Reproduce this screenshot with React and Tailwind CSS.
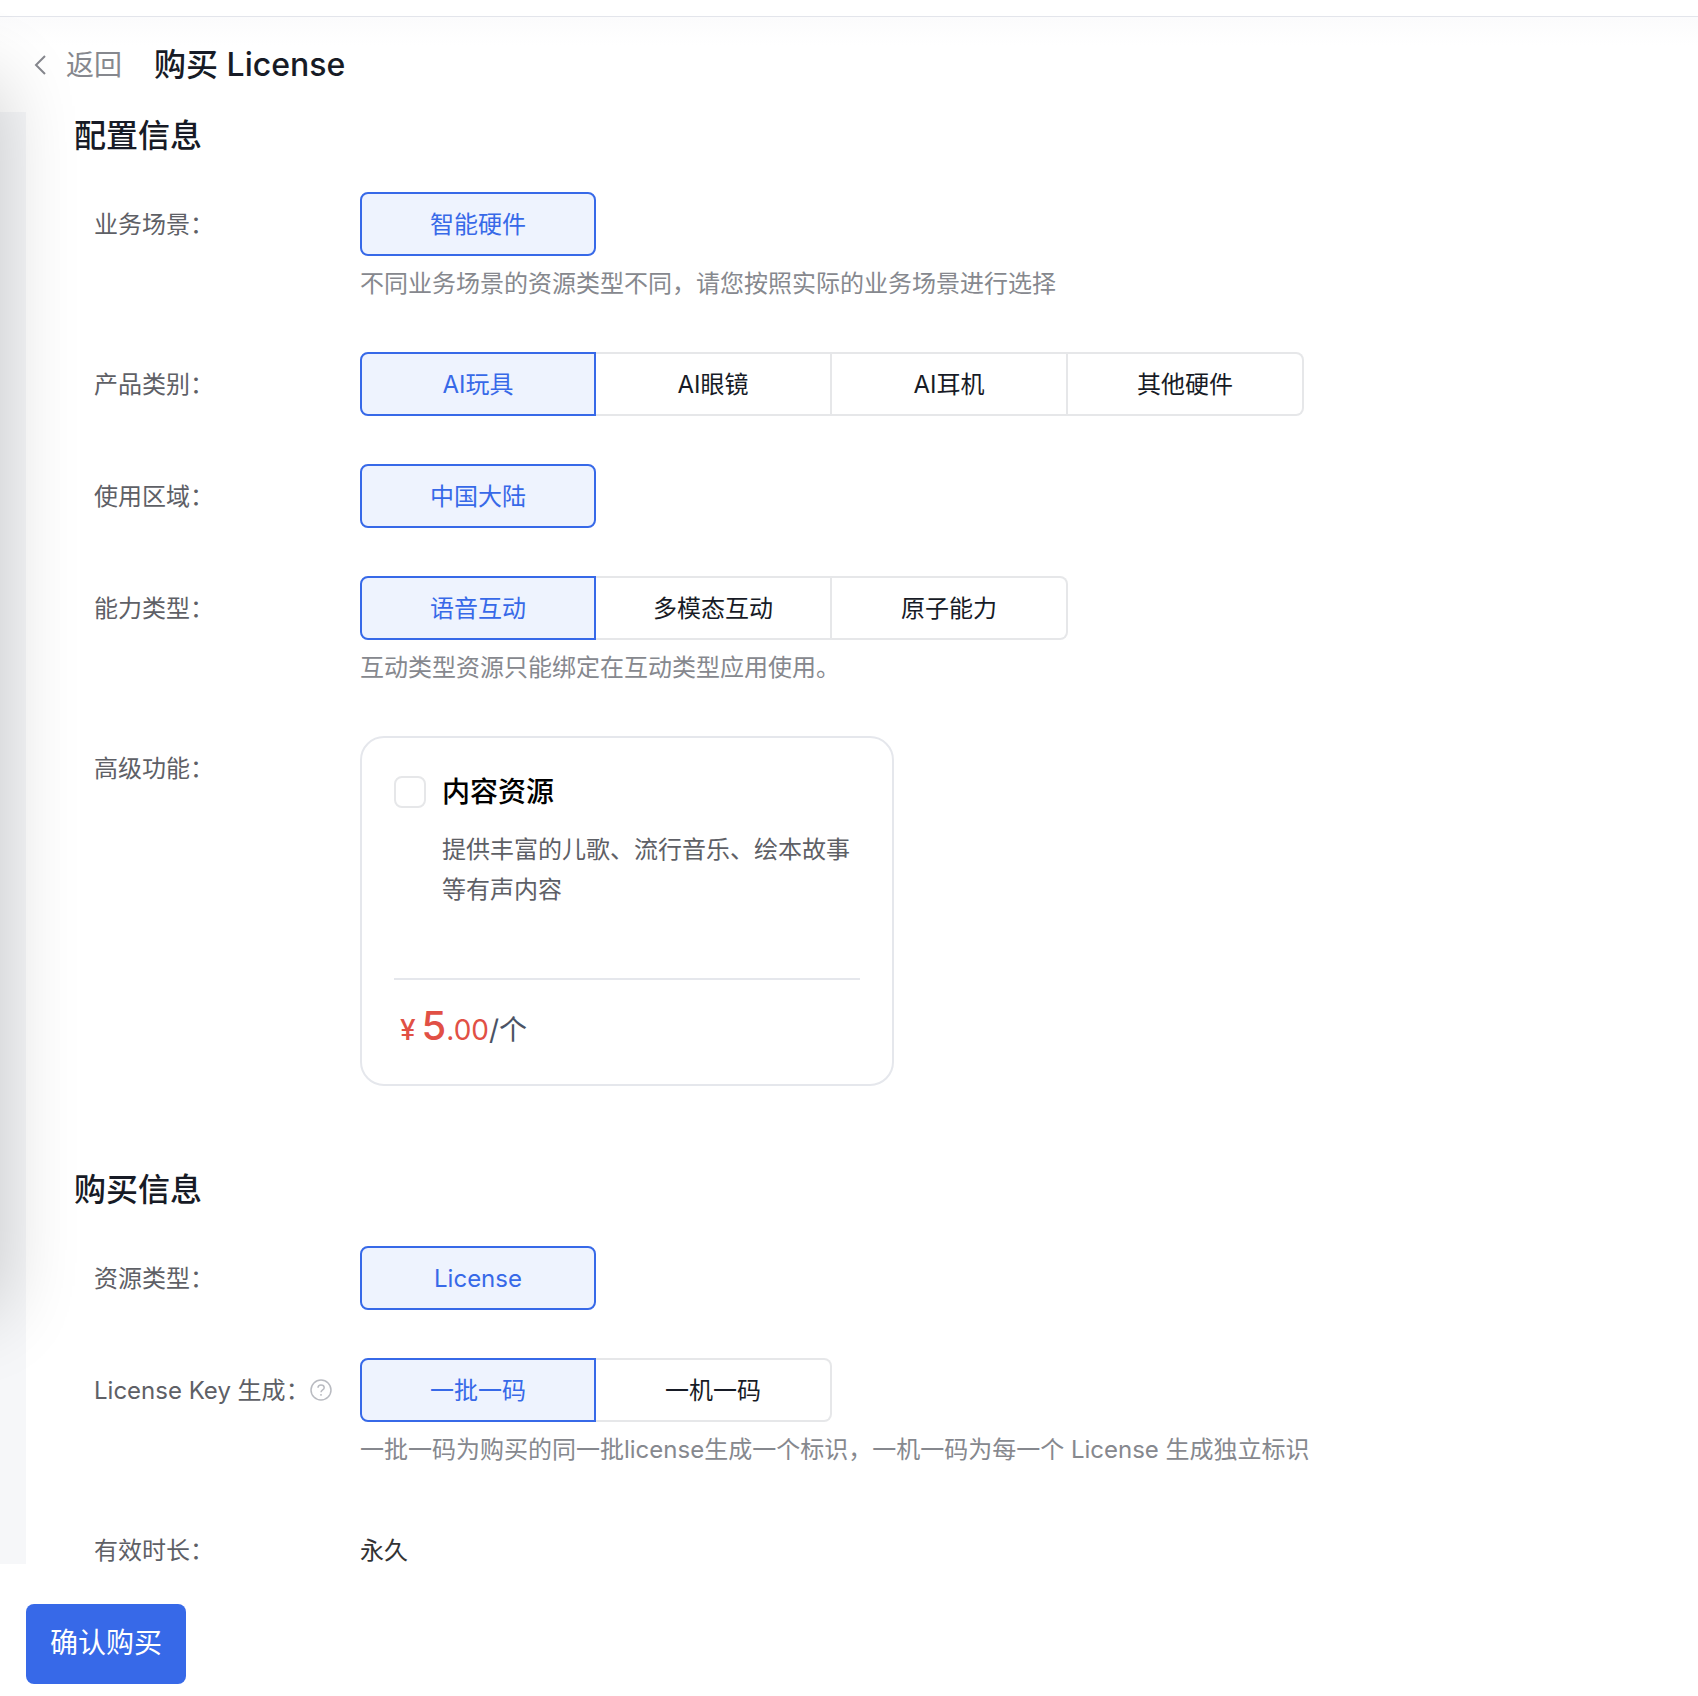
import React, { useState } from 'react';

const scenes = ['智能硬件'];
const categories = ['AI玩具', 'AI眼镜', 'AI耳机', '其他硬件'];
const regions = ['中国大陆'];
const abilities = ['语音互动', '多模态互动', '原子能力'];
const resources = ['License'];
const keyModes = ['一批一码', '一机一码'];

function Row({ label, hint, help, children }) {
  return (
    <div className="flex items-start">
      <div className="flex h-16 w-[266px] shrink-0 items-center pt-0.5 text-[#5e6066]">
        <span>{label}：</span>
        {hint && (
          <button type="button" aria-label="说明" className="text-[#b9bbc1]">
            <svg className="size-6" viewBox="0 0 24 24" fill="none" stroke="currentColor" strokeWidth="1.5">
              <circle cx="11" cy="11" r="10" />
              <path d="M8 8.8C8 7 9.3 6 11 6s3.2 1 3.2 2.7c0 2.2-3.2 2.3-3.2 4.6" />
              <path d="M11 15v1.7" />
            </svg>
          </button>
        )}
      </div>
      <div className="min-w-0 flex-1">
        {children}
        {help && <p className="pt-2 leading-10 text-[#86888e]">{help}</p>}
      </div>
    </div>
  );
}

function Segmented({ name, options }) {
  const [value, setValue] = useState(options[0]);

  return (
    <div role="radiogroup" aria-label={name} className="flex">
      {options.map(option => (
        <label
          key={option}
          className="relative flex h-16 w-[236px] cursor-pointer items-center justify-center border-2 border-l-0 border-[#e6e7e9] pt-0.5 text-[#171b26] first:rounded-l-lg first:border-l-2 last:rounded-r-lg has-checked:border-l-2 has-checked:border-[#3769e8] has-checked:bg-[#eef3fe] has-checked:text-[#3769e8]"
        >
          <input
            type="radio"
            name={name}
            value={option}
            checked={value === option}
            onChange={() => setValue(option)}
            className="sr-only"
          />
          {option}
        </label>
      ))}
    </div>
  );
}

function FeatureCard() {
  const [checked, setChecked] = useState(false);

  return (
    <div className="w-[534px] rounded-3xl border-2 border-[#e5e7ec] px-8 pb-6">
      <label className="flex cursor-pointer items-start gap-4 pt-8">
        <input
          type="checkbox"
          checked={checked}
          onChange={e => setChecked(e.target.checked)}
          className="mt-1.5 size-8 shrink-0 appearance-none rounded-lg border-2 border-[#e6e7e9] bg-white checked:border-[#3769e8] checked:bg-[#3769e8]"
        />
        <span className="flex min-h-[208px] flex-col gap-4">
          <span className="text-[28px] leading-11 font-medium text-black">内容资源</span>
          <span className="leading-10 text-[#5e6066]">提供丰富的儿歌、流行音乐、绘本故事等有声内容</span>
        </span>
      </label>
      <div className="flex items-baseline border-t-2 border-[#e5e7ec] px-1.5 pt-4 text-[28px] leading-15 text-[#e15045]">
        <span className="mr-1.5 font-medium">¥</span>
        <span className="text-[40px] font-medium">5</span>
        <span>.00</span>
        <span className="text-[#4b5365]">/个</span>
      </div>
    </div>
  );
}

export default function App() {
  return (
    <div className="relative min-h-screen overflow-hidden bg-white font-['Inter','Noto_Sans_CJK_SC',sans-serif] text-2xl">
      <div className="h-4" />
      <header className="flex h-24 items-center gap-8 border-t border-[#e3e5eb] bg-linear-to-b from-[#fbfbfc] to-white to-30% px-8 pt-0.5">
        <a href="#back" className="flex items-center gap-[18px] text-[28px] text-[#86888e]">
          <svg className="h-5 w-4" viewBox="0 0 16 20" fill="none" stroke="currentColor" strokeWidth="2">
            <path d="M13 1 4 10l9 9" />
          </svg>
          返回
        </a>
        <h1 className="text-[32px] font-medium text-[#171b26]">购买 License</h1>
      </header>

      <div className="flex">
        <aside className="w-[26px] shrink-0 bg-[#f6f7f9]" />
        <main className="-mb-[18px] min-w-0 flex-1 px-12">
          <section>
            <h2 className="h-20 text-[32px] leading-12 font-medium text-[#171b26]">配置信息</h2>
            <div className="flex flex-col gap-12 pl-5">
              <Row label="业务场景" help="不同业务场景的资源类型不同，请您按照实际的业务场景进行选择">
                <Segmented name="业务场景" options={scenes} />
              </Row>
              <Row label="产品类别">
                <Segmented name="产品类别" options={categories} />
              </Row>
              <Row label="使用区域">
                <Segmented name="使用区域" options={regions} />
              </Row>
              <Row label="能力类型" help="互动类型资源只能绑定在互动类型应用使用。">
                <Segmented name="能力类型" options={abilities} />
              </Row>
              <Row label="高级功能">
                <FeatureCard />
              </Row>
            </div>
          </section>

          <section className="pt-20">
            <h2 className="h-20 text-[32px] leading-12 font-medium text-[#171b26]">购买信息</h2>
            <div className="flex flex-col gap-12 pl-5">
              <Row label="资源类型">
                <Segmented name="资源类型" options={resources} />
              </Row>
              <Row
                label="License Key 生成"
                hint
                help="一批一码为购买的同一批license生成一个标识，一机一码为每一个 License 生成独立标识"
              >
                <Segmented name="License Key 生成" options={keyModes} />
              </Row>
              <Row label="有效时长">
                <p className="flex h-16 items-center pt-0.5 text-[#333333]">永久</p>
              </Row>
            </div>
          </section>
        </main>
      </div>

      <footer className="pt-10 pb-3 pl-[26px]">
        <button type="button" className="h-20 w-40 rounded-lg bg-[#3769e8] text-[28px] text-white">
          确认购买
        </button>
      </footer>

      {/* shade cast by the drawer on the left */}
      <div className="pointer-events-none absolute top-20 bottom-96 -left-24 w-24 shadow-[0_0_80px_rgba(0,0,0,0.2)]" />
    </div>
  );
}
